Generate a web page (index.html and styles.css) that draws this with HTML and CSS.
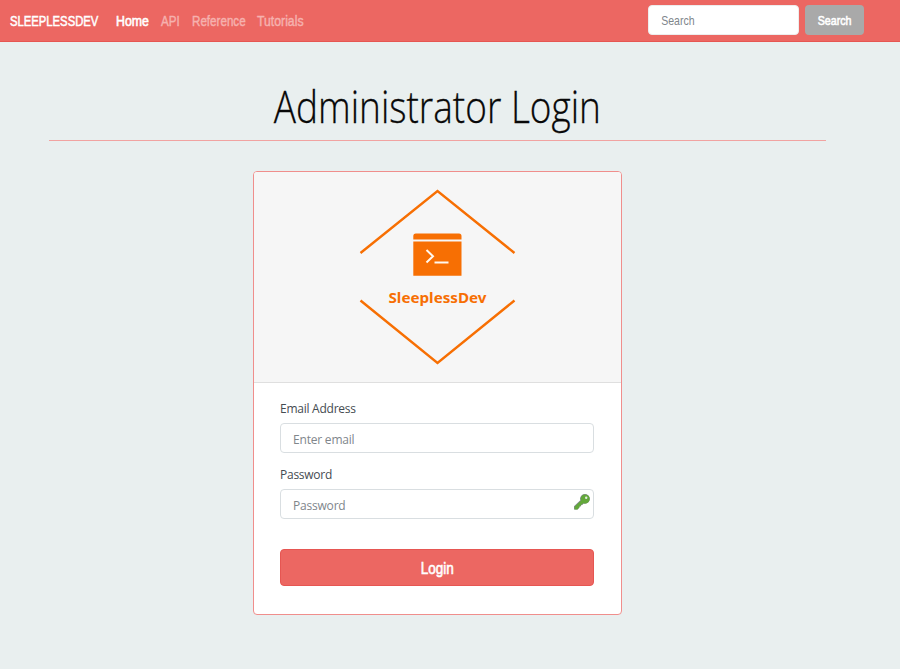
FILE: index.html
```html
<!DOCTYPE html>
<html lang="en">
<head>
<meta charset="utf-8">
<title>SleeplessDev - Administrator Login</title>
<link rel="stylesheet" href="styles.css">
</head>
<body>
<nav class="navbar">
  <a class="brand"><span class="narrow">SLEEPLESSDEV</span></a>
  <div class="links">
    <a class="link active"><span class="narrow">Home</span></a>
    <a class="link api"><span class="narrow">API</span></a>
    <a class="link reference"><span class="narrow">Reference</span></a>
    <a class="link tutorials"><span class="narrow">Tutorials</span></a>
  </div>
  <form class="search">
    <div class="search-box"><input class="search-input" type="text" placeholder="Search"></div>
    <button class="search-button" type="button"><span class="button-text">Search</span></button>
  </form>
</nav>
<main class="page">
  <h1 class="title"><span class="title-text">Administrator Login</span></h1>
  <section class="card">
    <div class="card-header">
      <svg class="logo" width="161" height="180" viewBox="0 0 161 180">
        <g fill="none" stroke="#f76f03" stroke-width="2.4">
          <path d="M3.500 66 80.500 4 157.500 66"/>
          <path d="M3.500 113.500 80.500 176 157.500 113.500"/>
        </g>
        <path fill="#f76f03" d="M56.300 52.500v-3.500a2.500 2.500 0 0 1 2.500-2.500h43.200a2.500 2.500 0 0 1 2.500 2.500v3.500zM56.300 54.500h48.200v34.300H56.300z"/>
        <path fill="none" stroke="#fff8ef" stroke-width="2" d="M69.500 63 76 69.300 69.500 75.500M77.500 75.500H91.500"/>
        <text class="logo-text" x="31.500" y="116" textLength="98" lengthAdjust="spacingAndGlyphs">SleeplessDev</text>
      </svg>
    </div>
    <form class="card-body">
      <label class="label" for="email">Email Address</label>
      <input class="field" id="email" type="email" placeholder="Enter email">
      <label class="label" for="password">Password</label>
      <div class="password">
        <input class="field" id="password" type="password" placeholder="Password">
        <svg class="key" width="16" height="16" viewBox="0 0 16 16">
          <path fill="#858a91" d="M6 4.800A4.900 4.900 0 1 1 11 9.800L9.400 9.700 8.200 11 7.100 11.200 6.800 12.400 5.500 12.600 5.200 13.700 3.600 15.600H0V12.300L6.300 6.300Z"/>
          <path fill="#63a83a" d="M6.700 4.700A4.500 4.500 0 1 1 11 9.400L9.200 9.200 8 10.500H7V11.800H5.500V13.200L3.400 15.400H.6V12.800L7 6.500Z"/>
          <circle cx="12.200" cy="3.800" r="1.200" fill="#e4eee0"/>
        </svg>
      </div>
      <button class="login" type="button"><span class="button-text">Login</span></button>
    </form>
  </section>
</main>
</body>
</html>
```
FILE: styles.css
```css
* { box-sizing: border-box; }

body {
  margin: 0;
  min-height: 669px;
  background: #e9efef;
  color: #454b51;
  font-family: "Open Sans", "Noto Sans", sans-serif;
}

input, button { font: inherit; outline: none; }

.navbar {
  display: flex;
  align-items: center;
  height: 42px;
  padding: 0 36px 2px 10px;
  background: #ec6762;
  border-bottom: 1px solid #e65652;
  font-family: "Liberation Sans", sans-serif;
  font-size: 14px;
}

.narrow { display: inline-block; transform: scaleX(.83); transform-origin: left; }

.brand {
  width: 106px;
  padding-top: 3px;
  color: #fff;
  -webkit-text-stroke: .5px;
}

.brand .narrow { transform: scaleX(.805); }

.links { display: flex; padding-top: 2px; }

.link {
  width: 45px;
  color: #f6b1ae;
  white-space: nowrap;
  -webkit-text-stroke: .45px;
}

.active { color: #fff; -webkit-text-stroke: .6px; }
.active .narrow { transform: scaleX(.88); }
.api { width: 31px; }
.reference { width: 65px; }
.tutorials .narrow { transform: scaleX(.875); }

.search { display: flex; gap: 6px; margin-left: auto; }

.search-box {
  width: 151px;
  height: 30px;
  border: 1px solid #ededed;
  border-radius: 4px;
  background: #fff;
}

.search-input {
  width: 180px;
  height: 28px;
  padding: 2px 0 0 15px;
  border: 0;
  background: transparent;
  font-size: 13px;
  transform: scaleX(.81);
  transform-origin: left;
}

.search-input::placeholder, .field::placeholder { color: #80868b; opacity: 1; }

.search-button {
  width: 59px;
  height: 30px;
  padding: 2px 0 0;
  border: 0;
  border-radius: 4px;
  background: #a9a9a9;
  color: #fff;
  font-size: 13px;
}

.button-text {
  display: inline-block;
  transform: scaleX(.82);
  -webkit-text-stroke: .6px;
}

.page { width: 777px; margin-left: 49px; }

.title {
  display: flex;
  justify-content: center;
  height: 99px;
  margin: 0 0 30px;
  padding-top: 35px;
  border-bottom: 1px solid #f1a3a1;
  color: #080808;
  font-size: 43.500px;
  font-weight: 300;
  line-height: 60px;
  white-space: nowrap;
}

.title-text { transform: scaleX(.85); -webkit-text-stroke: .3px; }

.card {
  width: 369px;
  height: 444px;
  margin: 0 auto;
  border: 1px solid #f08e8c;
  border-radius: 4px;
  background: #fff;
  overflow: hidden;
}

.card-header {
  height: 211px;
  padding-top: 15px;
  background: #f6f6f6;
  border-bottom: 1px solid #dfdfdf;
}

.logo { display: block; margin: 0 auto; }
.logo-text { fill: #f76f03; font: 700 15px "Noto Sans", sans-serif; }

.card-body { padding: 16px 27px 0 26px; }

.label {
  display: block;
  height: 24px;
  padding: 1px 0 0;
  font-size: 12px;
  line-height: 18px;
  letter-spacing: -.25px;
}

.field {
  display: block;
  width: 100%;
  height: 30px;
  margin-bottom: 12px;
  padding: 2px 12px 0;
  border: 1px solid #d9dee1;
  border-radius: 4px;
  background: #fff;
  font-size: 12px;
  letter-spacing: -.2px;
}

.password { position: relative; }
.key { position: absolute; top: 5px; right: 4px; }

.login {
  width: 100%;
  height: 37px;
  margin-top: 18px;
  padding: 2px 0 0;
  border: 1px solid #e65652;
  border-radius: 4px;
  background: #ec6762;
  color: #fff;
  font-family: "Liberation Sans", sans-serif;
  font-size: 16.500px;
}
```
